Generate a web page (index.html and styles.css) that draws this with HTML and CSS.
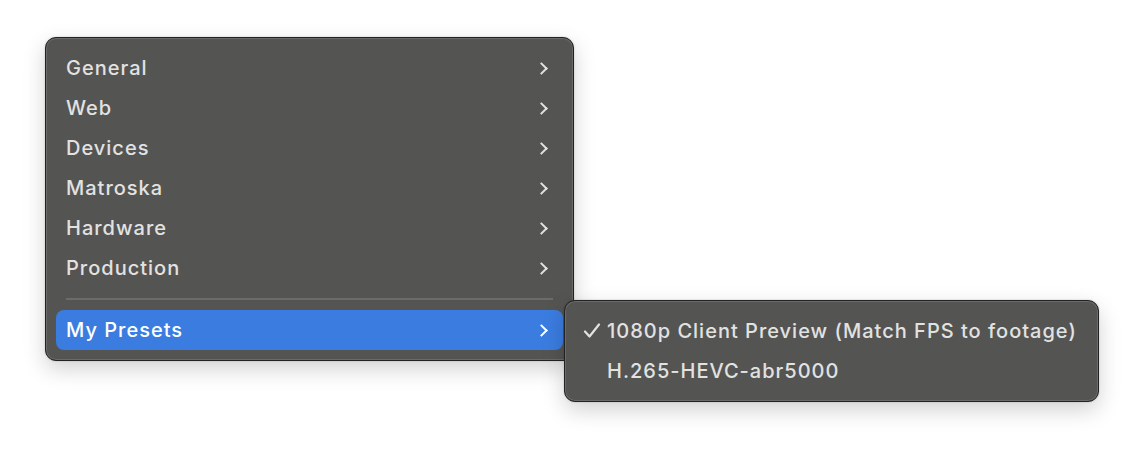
FILE: index.html
```html
<!DOCTYPE html>
<html lang="en">
<head>
  <meta charset="UTF-8" />
  <title>Presets Menu</title>
  <link rel="stylesheet" href="styles.css">
</head>
<body>

<div class="stage">
  <!-- Main preset menu -->
  <div class="menu">
    <div class="item"><span>General</span><span class="chev"></span></div>
    <div class="item"><span>Web</span><span class="chev"></span></div>
    <div class="item"><span>Devices</span><span class="chev"></span></div>
    <div class="item"><span>Matroska</span><span class="chev"></span></div>
    <div class="item"><span>Hardware</span><span class="chev"></span></div>
    <div class="item"><span>Production</span><span class="chev"></span></div>
    <div class="sep"></div>
    <div class="item active">
      <span>My Presets</span><span class="chev"></span>

      <!-- Submenu -->
      <div class="submenu">
        <div class="sub-item">
          <span class="check">
            <svg width="18" height="16" viewBox="0 0 18 16"><path d="M2 8.5 L6.5 13.5 L16 1.5" fill="none" stroke="currentColor" stroke-width="2.2" stroke-linecap="round" stroke-linejoin="round"/></svg>
          </span>
          <span>1080p Client Preview (Match FPS to footage)</span>
        </div>
        <div class="sub-item"><span class="check"></span><span>H.265-HEVC-abr5000</span></div>
      </div>
    </div>
  </div>
</div>

</body>
</html>
```

FILE: styles.css
```css
* {
  box-sizing: border-box;
}

html, body {
  margin: 0;
  padding: 0;
  background: #fff;
  font-family: 'Inter', 'Liberation Sans', sans-serif;
  width: 1144px;
  height: 454px;
  overflow: hidden;
}

.stage {
  padding: 37px 0 0 45px;
}

.menu {
  width: 529px;
  background: #545453;
  border: 1px solid #222;
  border-radius: 11px;
  box-shadow: inset 0 0 0 1px #6a6a69, 0 8px 22px rgba(0, 0, 0, 0.18), 0 0 2px rgba(0, 0, 0, 0.2);
  padding: 10px 10px;
}

.item {
  position: relative;
  height: 40px;
  display: flex;
  align-items: center;
  justify-content: space-between;
  padding: 0 14px 0 10px;
  border-radius: 8px;
  color: #e2e2e1;
  font-size: 20px;
  font-weight: 500;
  letter-spacing: 1px;
}

.item.active {
  background: #3b7ce0;
  color: #fff;
}

.chev {
  width: 9px;
  height: 9px;
  border-right: 2.4px solid currentColor;
  border-top: 2.4px solid currentColor;
  transform: rotate(45deg);
  margin-right: 3px;
}

.sep {
  height: 2px;
  background: #6b6b6a;
  margin: 10px 10px 10px 10px;
}

.submenu {
  position: absolute;
  left: 508px;
  top: -10px;
  width: 535px;
  background: #545453;
  border: 1px solid #222;
  border-radius: 11px;
  box-shadow: inset 0 0 0 1px #6a6a69, 0 8px 22px rgba(0, 0, 0, 0.18), 0 0 2px rgba(0, 0, 0, 0.2);
  padding: 10px 10px;
  letter-spacing: 1px;
}

.sub-item {
  height: 40px;
  display: flex;
  align-items: center;
  padding-left: 8px;
  color: #e2e2e1;
  font-size: 20px;
  font-weight: 500;
}

.check {
  width: 24px;
  display: flex;
  align-items: center;
}
```
